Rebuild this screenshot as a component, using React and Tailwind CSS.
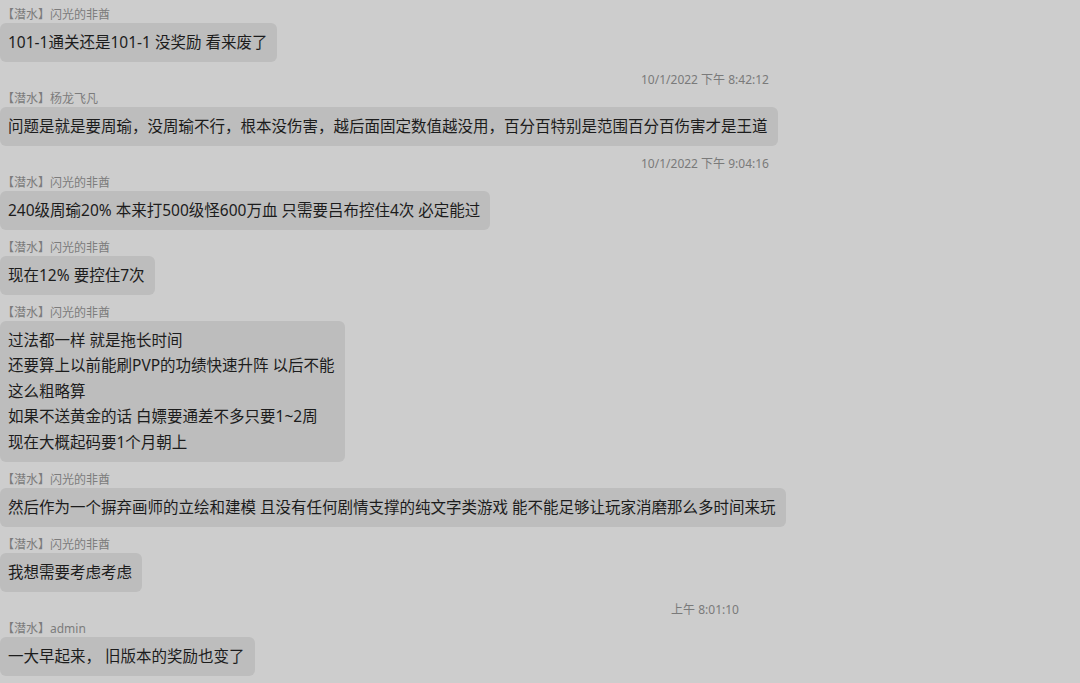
import React from "react";

const FONT = { fontFamily: '"Noto Sans", "Noto Sans CJK SC", sans-serif' };

const items = [
  { type: "msg", name: "【潜水】闪光的非酋", lines: ["101-1通关还是101-1 没奖励 看来废了"] },
  { type: "time", text: "10/1/2022 下午 8:42:12" },
  {
    type: "msg",
    name: "【潜水】杨龙飞凡",
    lines: [
      "问题是就是要周瑜，没周瑜不行，根本没伤害，越后面固定数值越没用，百分百特别是范围百分百伤害才是王道",
    ],
  },
  { type: "time", text: "10/1/2022 下午 9:04:16" },
  { type: "msg", name: "【潜水】闪光的非酋", lines: ["240级周瑜20% 本来打500级怪600万血 只需要吕布控住4次 必定能过"] },
  { type: "msg", name: "【潜水】闪光的非酋", lines: ["现在12% 要控住7次"] },
  {
    type: "msg",
    name: "【潜水】闪光的非酋",
    lines: [
      "过法都一样 就是拖长时间",
      "还要算上以前能刷PVP的功绩快速升阵 以后不能",
      "这么粗略算",
      "如果不送黄金的话 白嫖要通差不多只要1~2周",
      "现在大概起码要1个月朝上",
    ],
  },
  {
    type: "msg",
    name: "【潜水】闪光的非酋",
    lines: ["然后作为一个摒弃画师的立绘和建模 且没有任何剧情支撑的纯文字类游戏 能不能足够让玩家消磨那么多时间来玩"],
  },
  { type: "msg", name: "【潜水】闪光的非酋", lines: ["我想需要考虑考虑"] },
  { type: "time", text: "上午 8:01:10" },
  { type: "msg", name: "【潜水】admin", lines: ["一大早起来， 旧版本的奖励也变了"] },
];

function TimeStamp({ text }) {
  return (
    <div className="mt-[10px] mb-[3px] h-[16px] w-[1410px] text-center text-[12px] leading-[16px] text-[#7a7a7a]">
      {text}
    </div>
  );
}

function Message({ name, lines, first }) {
  return (
    <div className={first ? "" : "mt-[10px]"}>
      <div className="h-[16px] pl-[2px] text-[12px] leading-[16px] text-[#7c7c7c]">{name}</div>
      <div className="inline-block rounded-[6px] bg-[#bdbdbd] py-[6.75px] pl-[8px] pr-[10px] text-[15.5px] leading-[25.5px] text-[#1c1c1c]">
        {lines.map((l, i) => (
          <div key={i} className="whitespace-pre">
            {l}
          </div>
        ))}
      </div>
    </div>
  );
}

export default function App() {
  let prevTime = false;
  return (
    <div className="h-[683px] w-full overflow-hidden bg-[#cdcdcd] pt-[7px]" style={FONT}>
      {items.map((it, i) => {
        if (it.type === "time") {
          prevTime = true;
          return <TimeStamp key={i} text={it.text} />;
        }
        const noGap = i === 0 || prevTime;
        prevTime = false;
        return <Message key={i} name={it.name} lines={it.lines} first={noGap} />;
      })}
    </div>
  );
}
